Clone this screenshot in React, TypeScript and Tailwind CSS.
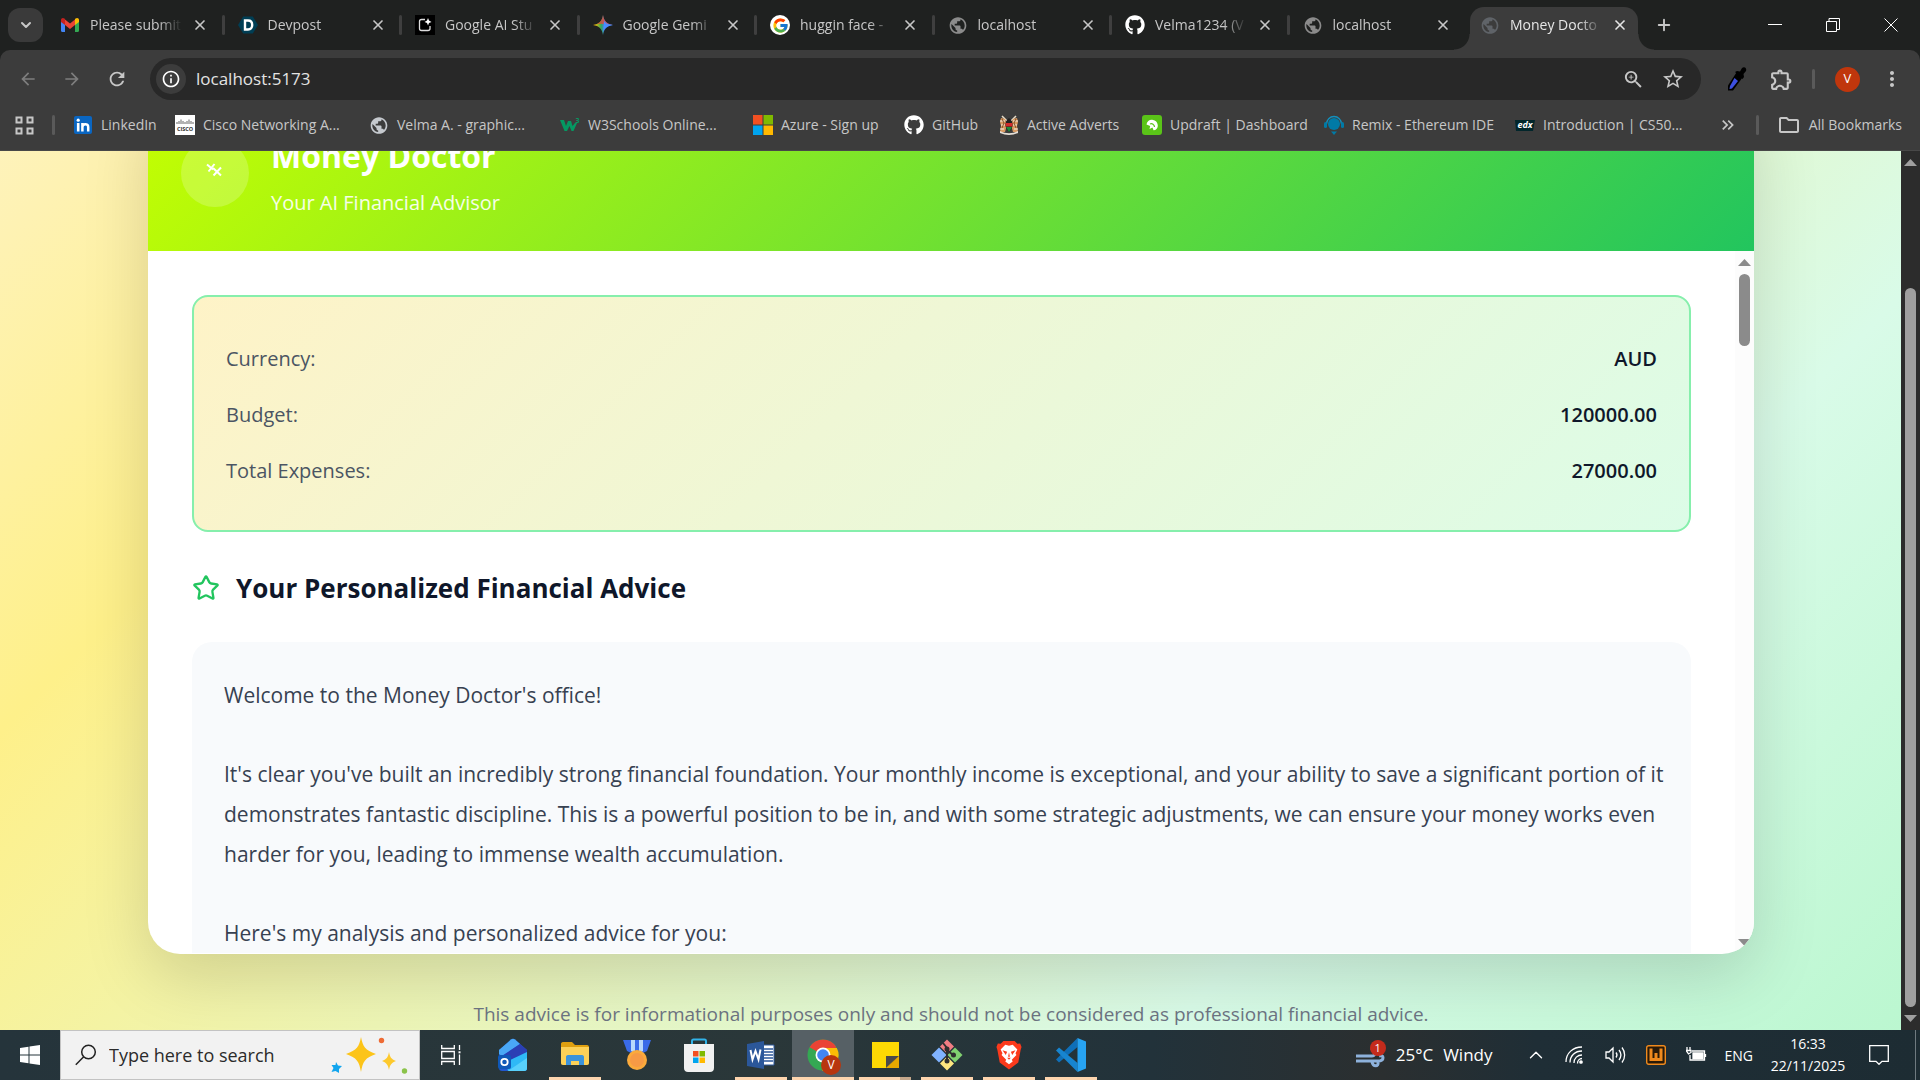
import type { ReactNode } from "react";
import { ChevronDown, ChevronUp, Plus, Star, X } from "lucide-react";
import { FaGithub } from "react-icons/fa";
import { FcGoogle } from "react-icons/fc";
import {
  MdArrowBack,
  MdArrowForward,
  MdInfoOutline,
  MdKeyboardDoubleArrowRight,
  MdMoreVert,
  MdOutlineExtension,
  MdOutlineFolder,
  MdPublic,
  MdRefresh,
  MdStarOutline,
  MdZoomIn,
} from "react-icons/md";

/* ---------- favicons ---------- */

function GmailIcon() {
  return (
    <svg width="20" height="20" viewBox="0 0 20 20">
      <path d="M1 4.500v11.300c0 .7.5 1.200 1.200 1.200H5V8z" fill="#4285f4" />
      <path d="M19 4.500v11.300c0 .7-.5 1.200-1.200 1.200H15V8z" fill="#34a853" />
      <path d="M5 4.500 10 8.500l5-4V10l-5 4-5-4z" fill="#ea4335" />
      <path d="M1 5c0-2 2-2.600 3.400-1.500L5 4v6L1 7z" fill="#c5221f" />
      <path d="M19 5c0-2-2-2.600-3.400-1.500L15 4v6l4-3z" fill="#fbbc04" />
    </svg>
  );
}

function DevpostIcon() {
  return (
    <svg width="20" height="20" viewBox="0 0 20 20">
      <path d="M5.200 1.500h9.600L20 10l-5.200 8.500H5.200L0 10z" fill="#003e54" />
      <path d="M7 5.500h3c2.800 0 4.200 1.800 4.200 4.500s-1.400 4.500-4.200 4.500H7z" fill="none" stroke="#fff" strokeWidth="2.400" />
    </svg>
  );
}

function AiStudioIcon() {
  return (
    <svg width="20" height="20" viewBox="0 0 20 20">
      <rect width="20" height="20" fill="#000" />
      <path d="M10 4.500H6.500a2 2 0 0 0-2 2v7a2 2 0 0 0 2 2h6.500a2 2 0 0 0 2-2V11" fill="none" stroke="#ddd" strokeWidth="1.300" />
      <path d="M13 3l1 2.500L16.500 7 14 8l-1 2.500L12 8 9.500 7 12 5.500z" fill="#fff" />
    </svg>
  );
}

function GeminiIcon() {
  return (
    <svg width="20" height="20" viewBox="0 0 20 20">
      <defs>
        <linearGradient id="gemini" x1="0" y1="0" x2="1" y2="0">
          <stop offset="0.1" stopColor="#fbbc04" />
          <stop offset="0.400" stopColor="#34a853" />
          <stop offset="0.600" stopColor="#4285f4" />
          <stop offset="1" stopColor="#4a8cff" />
        </linearGradient>
      </defs>
      <path d="M10 0c.8 6 4 9.200 10 10-6 .8-9.200 4-10 10-.8-6-4-9.200-10-10 6-.8 9.200-4 10-10z" fill="url(#gemini)" />
      <path d="M10 0c.8 6 4 9.200 10 10L10 9 4 8.800C7.500 7.500 9.500 4.500 10 0z" fill="#ea4335" opacity="0.750" />
      <path d="M11 6c1.500 2.500 4 3.600 9 4-6 .8-9 3-10 8z" fill="#4a8cff" />
    </svg>
  );
}

function GoogleIcon() {
  return (
    <span className="flex size-5 items-center justify-center rounded-full bg-white">
      <FcGoogle size={17} />
    </span>
  );
}

function LinkedInIcon() {
  return (
    <svg width="18" height="18" viewBox="0 0 18 18">
      <rect width="18" height="18" rx="2" fill="#0a66c2" />
      <circle cx="4.200" cy="4.200" r="1.600" fill="#fff" />
      <path d="M4.200 7v8.500" stroke="#fff" strokeWidth="2.600" />
      <path d="M8.400 15.500V7M8.400 11c0-3.500 5.800-4 5.800 0v4.500" fill="none" stroke="#fff" strokeWidth="2.500" />
    </svg>
  );
}

function CiscoIcon() {
  return (
    <svg width="20" height="20" viewBox="0 0 20 20">
      <rect width="20" height="20" fill="#fff" />
      <path d="M2 7v2M4 6v3M6 4.500V9M8 6v3M10 7v2M12 6v3M14 4.500V9M16 6v3M18 7v2" stroke="#555" strokeWidth="0.900" />
      <text x="10" y="15.500" textAnchor="middle" fontSize="5.500" fontWeight="700" fontFamily="Open Sans, sans-serif" fill="#333">
        CISCO
      </text>
    </svg>
  );
}

function W3Icon() {
  return (
    <svg width="20" height="20" viewBox="0 0 20 20">
      <path d="M0 5h4l2 6 2-5h3l1.500 5L15 8h2l-3.500 8h-2L9.500 11 7 16H4.500z" fill="#059862" />
      <text x="15.500" y="8" fontSize="7" fontWeight="700" fontFamily="Open Sans, sans-serif" fill="#059862">
        3
      </text>
    </svg>
  );
}

function MicrosoftIcon({ size = 20 }: { size?: number }) {
  return (
    <svg width={size} height={size} viewBox="0 0 20 20">
      <path d="M0 0h9.500v9.500H0z" fill="#f25022" />
      <path d="M10.500 0H20v9.500h-9.500z" fill="#7fba00" />
      <path d="M0 10.500h9.500V20H0z" fill="#00a4ef" />
      <path d="M10.500 10.500H20V20h-9.500z" fill="#ffb900" />
    </svg>
  );
}

function CrestIcon() {
  return (
    <svg width="20" height="20" viewBox="0 0 20 20">
      <path d="M3 1l5 5M17 1l-5 5" stroke="#e8dcc8" strokeWidth="1.500" />
      <path d="M2 3l4 1 2 6-2 7H1l1-6-1-4z" fill="#d99a62" />
      <path d="M18 3l-4 1-2 6 2 7h5l-1-6 1-4z" fill="#d99a62" />
      <path d="M1 6h5M2 10h4M1 14h4M14 6h5M14 10h4M15 14h4" stroke="#f4ece2" strokeWidth="1.200" />
      <path d="M3 4l2 4-2 5M17 4l-2 4 2 5" stroke="#7a4a22" strokeWidth="0.900" fill="none" />
      <path d="M10 3c3 2 4 5 3.500 8S11 16 10 17c-1-1-3-3-3.500-6S7 5 10 3z" fill="#222" />
      <path d="M6.600 8h6.800v3.500H6.600z" fill="#d22b2b" />
      <path d="M7 12h6l-3 5z" fill="#1e8a3c" />
      <path d="M1 16c6 3 12 3 18 0v2c-6 2.500-12 2.500-18 0z" fill="#e6dfd6" />
    </svg>
  );
}

function UpdraftIcon() {
  return (
    <svg width="20" height="20" viewBox="0 0 20 20">
      <rect width="20" height="20" rx="3" fill="#5ac418" />
      <path d="M4.500 9.500C5 6 8 4.300 11 5c3 .6 5 3 4.800 6-.2 2.500-2 4.300-4.300 4.200l-1-2.700-3 1.500.7-3z" fill="#fff" />
      <path d="M8 9c2-1 4.500.5 4.500 3" fill="none" stroke="#5ac418" strokeWidth="1.200" />
    </svg>
  );
}

function RemixIcon() {
  return (
    <svg width="20" height="20" viewBox="0 0 20 20">
      <circle cx="10" cy="9" r="6" fill="#007aa6" />
      <path d="M2.500 9a7.500 7.500 0 0 1 15 0" fill="none" stroke="#1390bd" strokeWidth="1.300" />
      <rect x="0" y="7" width="3" height="6" rx="1.500" fill="#007aa6" />
      <rect x="17" y="7" width="3" height="6" rx="1.500" fill="#007aa6" />
      <path d="M7 16.500h6L10 20z" fill="#007aa6" />
    </svg>
  );
}

function EdxIcon() {
  return (
    <svg width="20" height="20" viewBox="0 0 20 20">
      <path d="M0 5h20l-2 11H1z" fill="#02262b" />
      <text x="10" y="12.500" textAnchor="middle" fontSize="9" fontWeight="700" fontStyle="italic" fontFamily="Open Sans, sans-serif" fill="#fff">
        edx
      </text>
    </svg>
  );
}

/* ---------- browser chrome ---------- */

type TabData = { title: string; icon: ReactNode };

const tabs: TabData[] = [
  { title: "Please submit", icon: <GmailIcon /> },
  { title: "Devpost", icon: <DevpostIcon /> },
  { title: "Google AI Stu", icon: <AiStudioIcon /> },
  { title: "Google Gemi", icon: <GeminiIcon /> },
  { title: "huggin face -", icon: <GoogleIcon /> },
  { title: "localhost", icon: <MdPublic size={21} className="text-[#8b8b8b]" /> },
  { title: "Velma1234 (V", icon: <FaGithub size={20} className="text-white" /> },
  { title: "localhost", icon: <MdPublic size={21} className="text-[#8b8b8b]" /> },
];

function TabBody({ title, icon }: TabData) {
  return (
    <>
      <span className="flex w-5 shrink-0 justify-center">{icon}</span>
      <button className="ml-2.5 w-[92px] overflow-hidden whitespace-nowrap text-left text-[14px] leading-5 [mask-image:linear-gradient(to_right,#000_75%,transparent)]">
        {title}
      </button>
      <button aria-label={`Close ${title}`} className="ml-2 flex size-5 items-center justify-center">
        <X size={16} strokeWidth={2.5} />
      </button>
    </>
  );
}

function TabStrip() {
  return (
    <div className="flex h-[50px] shrink-0 items-center bg-[#1f2120] text-[#c7c7c7]">
      <button aria-label="Search tabs" className="ml-2 flex h-[34px] w-[35px] items-center justify-center rounded-xl bg-[#3a3a3a]">
        <ChevronDown size={16} strokeWidth={3} />
      </button>
      <div className="ml-1 flex h-full items-center">
        <div className="flex h-full w-[1420px]">
          {tabs.map((tab, i) => (
            <div key={i} className="flex min-w-0 flex-1 items-center pl-[13px]">
              <TabBody {...tab} />
              {i < tabs.length - 1 && <span className="ml-auto h-5 w-[3px] rounded bg-[#3f3f3f]" />}
            </div>
          ))}
        </div>
        <div className="relative ml-[3px] mt-[7px] flex h-[43px] w-[168px] items-center rounded-t-[14px] bg-[#3c3c3c] pb-[7px] pl-2.5 text-[#e6e6e6]">
          <span className="absolute -left-4 bottom-0 size-4 bg-[radial-gradient(circle_at_0_0,transparent_15px,#3c3c3c_16px)]" />
          <TabBody title="Money Docto" icon={<MdPublic size={21} className="text-[#5f6368]" />} />
          <span className="absolute -right-4 bottom-0 size-4 bg-[radial-gradient(circle_at_100%_0,transparent_15px,#3c3c3c_16px)]" />
        </div>
        <button aria-label="New tab" className="ml-4 flex size-5 items-center justify-center">
          <Plus size={18} strokeWidth={2.5} />
        </button>
      </div>
      <div className="ml-auto mr-[22px] flex items-center gap-11 text-white">
        <button aria-label="Minimize">
          <svg width="14" height="14" viewBox="0 0 14 14">
            <path d="M0 6.500h14" stroke="currentColor" />
          </svg>
        </button>
        <button aria-label="Restore">
          <svg width="14" height="14" viewBox="0 0 14 14" fill="none" stroke="currentColor">
            <path d="M.5 3.500h10v10h-10zM3 3.500v-3h10.500v11H11" />
          </svg>
        </button>
        <button aria-label="Close window">
          <svg width="14" height="14" viewBox="0 0 14 14">
            <path d="M.5.5l13 13M13.500.5l-13 13" stroke="currentColor" />
          </svg>
        </button>
      </div>
    </div>
  );
}

function Toolbar() {
  return (
    <div className="flex h-[58px] shrink-0 items-center rounded-t-[10px] bg-[#3c3c3c] pl-[18px] text-[#c7c7c7]">
      <div className="flex items-center gap-6">
        <button aria-label="Back" className="text-[#7d7d7d]">
          <MdArrowBack size={20} />
        </button>
        <button aria-label="Forward" className="text-[#7d7d7d]">
          <MdArrowForward size={20} />
        </button>
        <button aria-label="Reload">
          <MdRefresh size={22} />
        </button>
      </div>
      <div className="ml-[22px] flex h-[42px] flex-1 items-center rounded-full bg-[#282828] pl-1.5 pr-4">
        <button aria-label="Site information" className="flex size-[30px] items-center justify-center rounded-full bg-[#3c3c3c] text-white">
          <MdInfoOutline size={20} />
        </button>
        <input
          aria-label="Address"
          defaultValue="localhost:5173"
          className="ml-2.5 min-w-0 flex-1 bg-transparent text-[17px] leading-6 text-[#e3e3e3] outline-none"
        />
        <button aria-label="Zoom">
          <MdZoomIn size={23} />
        </button>
        <button aria-label="Bookmark this page" className="ml-4">
          <MdStarOutline size={24} />
        </button>
      </div>
      <div className="ml-6 mr-4 flex items-center">
        <button aria-label="Color picker">
          <svg width="22" height="26" viewBox="0 0 22 26">
            <path d="M11.500 6.500l6 5-9.500 13H3v-5z" fill="#000" />
            <path d="M9.500 12l3.500 3-6 7.500-2.500.5.500-3z" fill="#3d50e0" />
            <path d="M10 6l2-1 3 .5L17 2c3-2 5 1 4 3l-2.500 3 .5 3-1.500 2z" fill="#000" />
          </svg>
        </button>
        <button aria-label="Extensions" className="ml-[22px]">
          <MdOutlineExtension size={25} />
        </button>
        <span className="ml-[18px] h-5 w-[3px] rounded bg-[#5a5a5a]" />
        <button className="ml-5 flex size-[25px] items-center justify-center rounded-full bg-[#c0360c] text-[13px] text-white">V</button>
        <button aria-label="Menu" className="ml-5">
          <MdMoreVert size={24} />
        </button>
      </div>
    </div>
  );
}

const bookmarks = [
  { label: "LinkedIn", width: "w-[102px]", icon: <LinkedInIcon /> },
  { label: "Cisco Networking A...", width: "w-[194px]", icon: <CiscoIcon /> },
  { label: "Velma A. - graphic...", width: "w-[191px]", icon: <MdPublic size={21} className="text-[#c5c9ce]" /> },
  { label: "W3Schools Online...", width: "w-[193px]", icon: <W3Icon /> },
  { label: "Azure - Sign up", width: "w-[151px]", icon: <MicrosoftIcon /> },
  { label: "GitHub", width: "w-[95px]", icon: <FaGithub size={20} className="text-white" /> },
  { label: "Active Adverts", width: "w-[143px]", icon: <CrestIcon /> },
  { label: "Updraft | Dashboard", width: "w-[182px]", icon: <UpdraftIcon /> },
  { label: "Remix - Ethereum IDE", width: "w-[191px]", icon: <RemixIcon /> },
  { label: "Introduction | CS50...", width: "w-[170px]", icon: <EdxIcon /> },
];

function BookmarksBar() {
  return (
    <nav className="flex h-[43px] shrink-0 items-center border-b border-[#484848] bg-[#3c3c3c] pb-2 pl-[15px] text-[14px] leading-5 text-[#c7c7c7]">
      <button aria-label="Apps">
        <svg width="19" height="19" viewBox="0 0 19 19" fill="none" stroke="currentColor" strokeWidth="2">
          <path d="M1.500 1.500h5v5h-5zM12.500 1.500h5v5h-5zM1.500 12.500h5v5h-5zM12.500 12.500h5v5h-5z" />
        </svg>
      </button>
      <span className="ml-[18px] h-5 w-[3px] rounded bg-[#5a5a5a]" />
      <div className="ml-[18px] flex">
        {bookmarks.map(({ label, width, icon }) => (
          <a key={label} href="#" className={`flex shrink-0 items-center gap-2 whitespace-nowrap ${width}`}>
            <span className="flex w-5 shrink-0 justify-center">{icon}</span>
            {label}
          </a>
        ))}
      </div>
      <div className="ml-auto mr-[18px] flex items-center">
        <button aria-label="More bookmarks">
          <MdKeyboardDoubleArrowRight size={20} />
        </button>
        <span className="ml-[18px] h-5 w-[3px] rounded bg-[#5a5a5a]" />
        <a href="#" className="ml-[18px] flex items-center gap-2 whitespace-nowrap">
          <MdOutlineFolder size={24} />
          All Bookmarks
        </a>
      </div>
    </nav>
  );
}

/* ---------- page ---------- */

const summary = [
  { label: "Currency:", value: "AUD" },
  { label: "Budget:", value: "120000.00" },
  { label: "Total Expenses:", value: "27000.00" },
];

const advice = [
  "Welcome to the Money Doctor's office!",
  "It's clear you've built an incredibly strong financial foundation. Your monthly income is exceptional, and your ability to save a significant portion of it demonstrates fantastic discipline. This is a powerful position to be in, and with some strategic adjustments, we can ensure your money works even harder for you, leading to immense wealth accumulation.",
  "Here's my analysis and personalized advice for you:",
];

function ScrollArrow({ down }: { down?: boolean }) {
  return (
    <svg width="13" height="7" viewBox="0 0 13 7" fill="currentColor" className="shrink-0">
      <path d={down ? "M0 0h13L6.500 7z" : "M0 7h13L6.500 0z"} />
    </svg>
  );
}

function MoneyDoctor() {
  return (
    <div className="bg-[linear-gradient(135deg,#fef3c7_0%,#fef08a_25%,#d9fbe8_75%,#bbf7d0_100%)] pl-[148px] pr-[147px] pt-[98px]">
      <main className="overflow-hidden rounded-[32px] bg-white shadow-[0_22px_66px_rgba(0,0,0,0.15)]">
        <header className="flex items-start gap-[22px] bg-[linear-gradient(135deg,#c6ff00_0%,#22c55e_100%)] px-[33px] pb-[33px] pt-[39px] text-white">
          <div className="flex h-[78px] items-center">
            <div className="flex size-[68px] items-center justify-center rounded-full bg-white/20">
              <svg width="16" height="16" viewBox="0 0 16 16" fill="none" stroke="currentColor" strokeWidth="2" className="mb-1.5 mr-0.5">
                <path d="M1 2.500l6 5M8.500 2L2.500 9.500M7 6l8 7.500M15 5.500L7.500 13.500" />
              </svg>
            </div>
          </div>
          <div>
            <h1 className="text-[32px] font-bold leading-[44px]">Money Doctor</h1>
            <p className="mt-2.5 text-[20px] leading-[30px] text-white/90">Your AI Financial Advisor</p>
          </div>
        </header>

        <div className="flex h-[703px]">
          <div className="min-w-0 flex-1 overflow-hidden px-11 pt-11">
            <dl className="rounded-2xl border-2 border-[#86efac] bg-[linear-gradient(135deg,#fef3c7_0%,#dcfce7_100%)] px-8 pb-[31px] pt-[34px] text-[20px]">
              {summary.map(({ label, value }) => (
                <div key={label} className="flex h-14 items-center justify-between">
                  <dt className="text-[#4b5563]">{label}</dt>
                  <dd className="font-semibold text-[#0f172a]">{value}</dd>
                </div>
              ))}
            </dl>
            <h2 className="mt-9 flex h-10 items-center gap-4 text-[26px] font-bold text-[#0f172a]">
              <Star size={28} strokeWidth={2} strokeLinejoin="miter" className="text-[#22c55e]" />
              Your Personalized Financial Advice
            </h2>
            <div className="mt-[34px] space-y-[39px] rounded-t-[20px] bg-[#f8fafc] pl-8 pr-5 pt-[33px] text-[21px] leading-10 text-[#374151]">
              {advice.map((text) => (
                <p key={text}>{text}</p>
              ))}
            </div>
          </div>
          <div className="flex w-[19px] flex-col items-center bg-[#fcfcfc] py-2 text-[#8b8b8b]">
            <ScrollArrow />
            <span className="mt-2 h-[72px] w-[11px] rounded-full bg-[#8b8b8b]" />
            <span className="flex-1" />
            <ScrollArrow down />
          </div>
        </div>
      </main>
      <footer className="flex h-[76px] items-end justify-center text-[19px] leading-8 text-[#6b7280]">
        This advice is for informational purposes only and should not be considered as professional financial advice.
      </footer>
    </div>
  );
}

/* ---------- taskbar ---------- */

function OutlookIcon() {
  return (
    <svg width="30" height="34" viewBox="0 0 30 34">
      <path d="M1 12L13 1.500c1.300-1 2.700-1 4 0L29 12v18c0 2-1 3-3 3H4c-2 0-3-1-3-3z" fill="#2257cf" />
      <path d="M1 12L13 1.500c1.300-1 2.700-1 4 0L22 6 4 18l-3-2z" fill="#4aa8f6" />
      <path d="M22 6l7 6v4L12 27l-8-7v-2z" fill="#2b3fb4" />
      <path d="M29 14v16c0 2-1 3-3 3H10L8 24z" fill="#2fb9f6" />
      <path d="M10 33L29 20v10c0 2-1 3-3 3z" fill="#58d0fb" />
      <rect y="17" width="13" height="14" rx="2" fill="#0f58b8" />
      <circle cx="6.500" cy="24" r="3.200" fill="none" stroke="#fff" strokeWidth="1.800" />
    </svg>
  );
}

function ExplorerIcon() {
  return (
    <svg width="28" height="28" viewBox="0 0 28 28">
      <path d="M0 3c0-1 .5-2 2-2h9l3 3h12c1.500 0 2 1 2 2v6H0z" fill="#e0a010" />
      <path d="M0 6h28v16c0 1-.5 2-2 2H2c-1.500 0-2-1-2-2z" fill="#fdd158" />
      <path d="M5 24v-8c0-1 .5-2 2-2h14c1.500 0 2 1 2 2v8h-5v-4h-8v4z" fill="#3b93dc" />
    </svg>
  );
}

function MedalIcon() {
  return (
    <svg width="30" height="34" viewBox="0 0 30 34">
      <path d="M1 2h28l-4 11-10 5-10-5z" fill="#3a6be8" />
      <path d="M9 2h4v13l-4-2zM17 2h4v11l-4 2z" fill="#b8d8fb" />
      <circle cx="15" cy="22" r="10" fill="#fbaa3c" />
      <circle cx="15" cy="22" r="7" fill="#f79a45" />
    </svg>
  );
}

function StoreIcon() {
  return (
    <svg width="30" height="34" viewBox="0 0 30 34">
      <path d="M8 6V3c0-1 .5-1.500 1.500-1.500h11c1 0 1.500.5 1.500 1.500v3" fill="none" stroke="#32b3e8" strokeWidth="2" />
      <path d="M0 6h30v24c0 2.500-1.500 4-4 4H4c-2.500 0-4-1.500-4-4z" fill="#f1f1f1" />
      <path d="M9 13h5.500v5.500H9z" fill="#f25022" />
      <path d="M15.500 13H21v5.500h-5.500z" fill="#7fba00" />
      <path d="M9 19.500h5.500V25H9z" fill="#00a4ef" />
      <path d="M15.500 19.500H21V25h-5.500z" fill="#ffb900" />
    </svg>
  );
}

function WordIcon() {
  return (
    <svg width="28" height="30" viewBox="0 0 28 30">
      <path d="M14 5h13v20H14z" fill="#fff" stroke="#2b579a" />
      <path d="M17 9h9M17 12h9M17 15h9M17 18h9M17 21h9" stroke="#2b579a" strokeWidth="1.500" />
      <path d="M0 4l17-3v28L0 26z" fill="#2b579a" />
      <path d="M3.500 10l2 9.500L8.500 11l3 8.500 2-10" fill="none" stroke="#fff" strokeWidth="2" />
    </svg>
  );
}

function ChromeIcon() {
  return (
    <div className="relative">
      <svg width="32" height="32" viewBox="0 0 32 32">
        <circle cx="16" cy="16" r="15.500" fill="#34a853" />
        <path d="M16 16L2.600 8.200A15.500 15.500 0 0 1 29.400 8.200z" fill="#ea4335" />
        <path d="M16 9h13.800A15.500 15.500 0 0 1 15 31.500L22 19z" fill="#fbbc05" />
        <circle cx="16" cy="16" r="7.500" fill="#fff" />
        <circle cx="16" cy="16" r="5.800" fill="#4285f4" />
      </svg>
      <span className="absolute -bottom-1 -right-0.5 flex size-5 items-center justify-center rounded-full bg-[#b8360f] text-[12px] text-white">V</span>
    </div>
  );
}

function StickyIcon() {
  return (
    <svg width="27" height="28" viewBox="0 0 27 28">
      <path d="M0 1h27v14L14 27H0z" fill="#fdd903" />
      <path d="M14 15h13L14 27z" fill="#4a4a4a" />
      <path d="M27 15v12H14z" fill="#e8a800" />
    </svg>
  );
}

function GitIcon() {
  return (
    <svg width="32" height="32" viewBox="0 0 32 32">
      <path d="M16 .5l7 7-7 7-7-7z" fill="#f27d83" />
      <path d="M8 8.500l7.500 7.500L8 23.500.5 16z" fill="#80b3ff" />
      <path d="M24 8.500l7.500 7.500-7.500 7.500-7.500-7.500z" fill="#80d070" />
      <path d="M16 17.500l7 7-7 7-7-7z" fill="#ffe680" />
      <path d="M12 4l4 5v12M16 11l6 5" stroke="#2f2f2f" strokeWidth="2" fill="none" />
      <circle cx="16" cy="10" r="2.500" fill="#2f2f2f" />
      <circle cx="16" cy="22" r="2.500" fill="#2f2f2f" />
      <circle cx="22.500" cy="16" r="2.500" fill="#2f2f2f" />
    </svg>
  );
}

function BraveIcon() {
  return (
    <svg width="26" height="32" viewBox="0 0 28 32">
      <path d="M8 1h12l3 3 3-.5 1.500 4-1 3L24 24l-10 7.500L4 24 1.500 10.500l-1-3L2 3.500 5 4z" fill="#fb3a1c" />
      <path d="M14 6l4-1 5 5-2 4 1 2-5 5 1 2-4 3-4-3 1-2-5-5 1-2-2-4 5-5z" fill="#fff" />
      <path d="M7 11l5 1.500-1.500 3.500zM21 11l-5 1.500 1.500 3.500zM12 19h4l-2 2zM14 13l1 5h-2z" fill="#fb3a1c" />
    </svg>
  );
}

function VscodeIcon() {
  return (
    <svg width="30" height="34" viewBox="0 0 30 34">
      <path d="M0 21.500L21.500 0v9L3 24.500z" fill="#0f6fb8" />
      <path d="M0 12.500L3 9.500 21.500 25v9z" fill="#1785d0" />
      <path d="M21.500 0l8.500 3.500v27L21.500 34z" fill="#27a3f2" />
    </svg>
  );
}

const apps: { name: string; icon: ReactNode; open?: boolean; active?: boolean; stacked?: boolean }[] = [
  { name: "Outlook", icon: <OutlookIcon /> },
  { name: "File Explorer", icon: <ExplorerIcon />, open: true },
  { name: "Rewards", icon: <MedalIcon /> },
  { name: "Store", icon: <StoreIcon /> },
  { name: "Word", icon: <WordIcon />, open: true },
  { name: "Chrome", icon: <ChromeIcon />, open: true, active: true },
  { name: "Sticky Notes", icon: <StickyIcon />, open: true, stacked: true },
  { name: "Git Bash", icon: <GitIcon />, open: true },
  { name: "Brave", icon: <BraveIcon />, open: true },
  { name: "VS Code", icon: <VscodeIcon />, open: true },
];

function SearchSparkles() {
  return (
    <svg width="78" height="40" viewBox="0 0 78 40">
      <path d="M30 2c2 10 4 13 15 17-11 4-13 7-15 18-2-11-4-14-15-18 11-4 13-7 15-17z" fill="#fcc419" />
      <path d="M58 17c1 5 2 7 7 9-5 2-6 4-7 9-1-5-2-7-7-9 5-2 6-4 7-9z" fill="#fdc92c" />
      <path d="M5 27l2 3.500 4 .5-3 3v4l-3.500-2-4 1 2-4-2-3h4z" fill="#12a5ee" />
      <circle cx="50.500" cy="5.500" r="2.700" fill="#ee6b35" />
      <circle cx="73.500" cy="36" r="2.700" fill="#8bc34a" />
    </svg>
  );
}

function Taskbar() {
  return (
    <div className="flex h-[50px] shrink-0 items-center bg-[linear-gradient(to_right,#25343b,#2a3739_40%,#22323a_60%,#2b2f30_72%,#1f2e36_80%,#1d2c33)] text-white">
      <button aria-label="Start" className="flex w-[60px] justify-center">
        <svg width="20" height="20" viewBox="0 0 20 20" fill="#fff">
          <path d="M0 3l8.500-1.200v7.700H0zM9.500 1.600L20 0v9.500H9.500zM0 10.500h8.500v7.700L0 17zM9.500 10.500H20V20L9.500 18.400z" />
        </svg>
      </button>
      <label className="flex h-[50px] w-[360px] items-center border border-[#c3c3c3] bg-[#f2f2f2] pl-3.5 pr-2.5 text-[#222]">
        <svg width="22" height="22" viewBox="0 0 22 22" fill="none" stroke="currentColor" strokeWidth="1.500">
          <circle cx="13.500" cy="8" r="6.800" />
          <path d="M8.700 12.800L.8 20.700" />
        </svg>
        <input placeholder="Type here to search" className="ml-3 min-w-0 flex-1 bg-transparent text-[18px] outline-none placeholder:text-[#2b2b2b]" />
        <SearchSparkles />
      </label>
      <button aria-label="Task view" className="flex w-[62px] justify-center">
        <svg width="20" height="22" viewBox="0 0 20 22" fill="none" stroke="currentColor" strokeWidth="1.300">
          <path d="M.7 1v3.500h12.600V1M.7 21v-3.500h12.600V21M.7 7.500h12.600v7H.7zM18.500 1v5M18.500 10.500V21" />
          <path d="M17.500 8.300h2" strokeWidth="2" />
        </svg>
      </button>
      <div className="flex h-full">
        {apps.map(({ name, icon, open, active, stacked }) => (
          <button
            key={name}
            aria-label={name}
            className={`relative flex h-full w-[62px] items-center justify-center ${active ? "bg-[#566065]" : ""}`}
          >
            {icon}
            {open && (
              <span
                className={`absolute bottom-0 h-[3px] bg-[#fdd5ae] ${active ? "inset-x-0" : "inset-x-[5px]"} ${stacked ? "border-r-[11px] border-[#c5a88c]" : ""}`}
              />
            )}
          </button>
        ))}
      </div>
      <div className="ml-auto flex h-full items-center">
        <button className="flex items-center text-[17px]">
          <span className="relative">
            <svg width="30" height="30" viewBox="0 0 30 30" fill="none" stroke="#8eb2dc" strokeWidth="3">
              <path d="M0 16h16c5 0 3-8-1-6M0 21h22c7 0 6-7 1-5M16 22c1 5 7 5 6 0" />
            </svg>
            <span className="absolute right-0 top-0 flex size-4 items-center justify-center rounded-full bg-[#c42b1c] text-[11px]">1</span>
          </span>
          <span className="ml-2.5">25°C</span>
          <span className="ml-2.5">Windy</span>
        </button>
        <button aria-label="Hidden icons" className="ml-8">
          <ChevronUp size={22} strokeWidth={1.500} />
        </button>
        <div className="ml-[18px] flex items-center gap-5">
          <svg width="20" height="20" viewBox="0 0 20 20" fill="none" stroke="currentColor" strokeWidth="1.300">
            <path d="M1 17C1 8 8 2 17 2M5 17.500C5 11 10 6 17 6M9 18c0-5 3.500-8 8-8M12.500 18.500c0-3 2-5 4.500-5" />
            <circle cx="16" cy="17" r="1.200" fill="currentColor" />
          </svg>
          <svg width="21" height="20" viewBox="0 0 21 20" fill="none" stroke="currentColor" strokeWidth="1.300">
            <path d="M1 7h3l4-4v14l-4-4H1zM11 7.500c1.200 1.500 1.200 3.500 0 5M14 5c2.300 3 2.300 7 0 10M17 2.500c3.500 4.500 3.500 10.500 0 15" />
          </svg>
          <svg width="20" height="20" viewBox="0 0 20 20" fill="none" stroke="#f08a1d">
            <rect x=".7" y=".7" width="18.600" height="18.600" rx="2" strokeWidth="1.400" fill="#2a1a08" />
            <path d="M5 3.500v11h10v-11M10 8v6" strokeWidth="3" />
          </svg>
          <svg width="21" height="16" viewBox="0 0 21 16" fill="none" stroke="currentColor" strokeWidth="1.300">
            <path d="M6 4h12.500v9H4V8M19.500 7v3" />
            <path d="M7 6h10v5.500H7z" fill="currentColor" />
            <path d="M1 0v3M4 0v3M0 3.500h5v2L2.500 7z" />
          </svg>
        </div>
        <button className="ml-[18px] text-[14px]">ENG</button>
        <button className="ml-4 w-[78px] text-center text-[14px] leading-[22px]">
          16:33
          <br />
          22/11/2025
        </button>
        <button aria-label="Notifications" className="ml-[22px] mr-[26px]">
          <svg width="20" height="20" viewBox="0 0 20 20" fill="none" stroke="currentColor" strokeWidth="1.300">
            <path d="M.7.7h18.600v15.600H13l-3 3-3-3H.7z" />
          </svg>
        </button>
        <span className="mr-1 h-full w-px bg-[#6f7a80]" />
      </div>
    </div>
  );
}

export default function App() {
  return (
    <div className="flex h-screen flex-col overflow-hidden bg-[#1f2120] font-['Open_Sans','Noto_Sans',sans-serif]">
      <TabStrip />
      <Toolbar />
      <BookmarksBar />
      <div className="flex min-h-0 flex-1">
        {/* scrolled to the end of the page, so the top is cut off */}
        <div className="flex min-w-0 flex-1 flex-col justify-end overflow-hidden">
          <MoneyDoctor />
        </div>
        <div className="flex w-[19px] flex-col items-center bg-[#2c2c2c] py-2 text-[#9f9f9f]">
          <ScrollArrow />
          <span className="h-[122px] shrink-0" />
          <span className="mb-2 w-[11px] flex-1 rounded-full bg-[#9f9f9f]" />
          <ScrollArrow down />
        </div>
      </div>
      <Taskbar />
    </div>
  );
}
